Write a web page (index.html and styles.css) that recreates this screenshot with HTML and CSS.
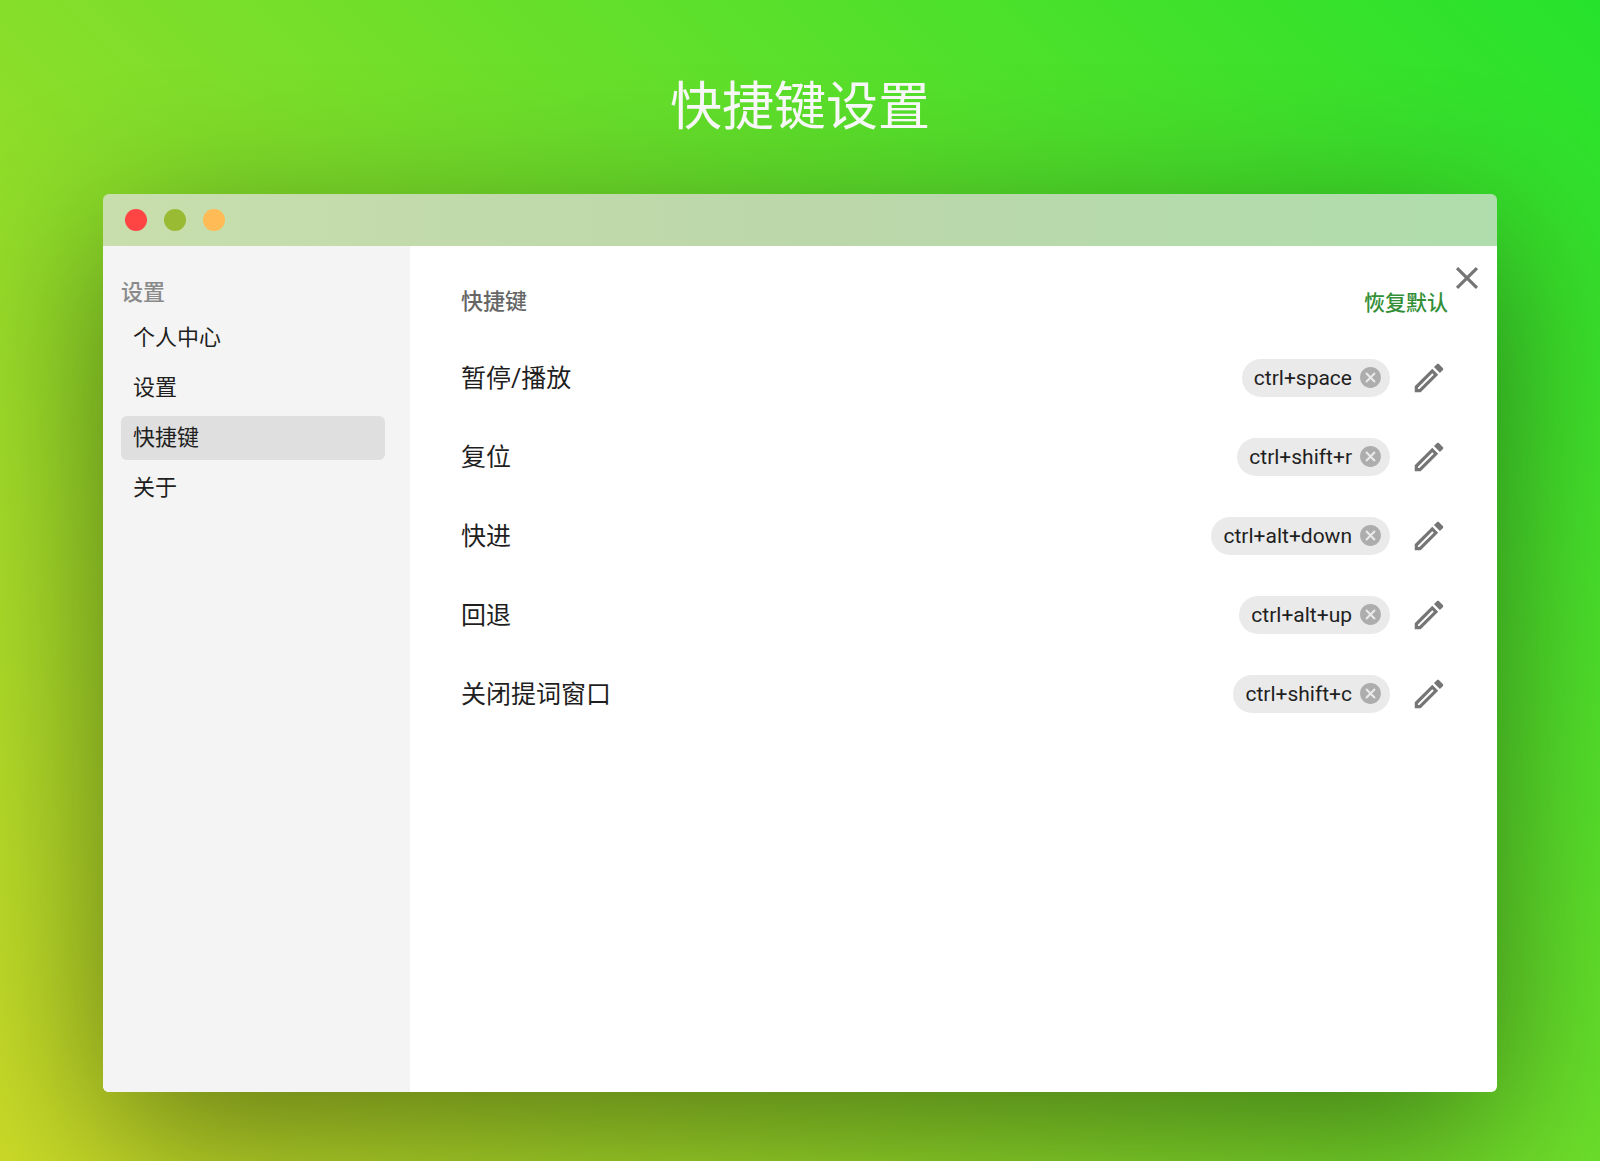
FILE: index.html
```html
<!DOCTYPE html>
<html lang="zh-CN">
<head>
<meta charset="utf-8">
<meta name="viewport" content="width=device-width, initial-scale=1">
<title>快捷键设置</title>
<link rel="stylesheet" href="styles.css">
</head>
<body>
<svg class="sprite" aria-hidden="true">
  <symbol id="icon-edit" viewBox="0 0 24 24"><path d="M14.06 9l.94.94L5.92 19H5v-.92L14.06 9M17.66 3c-.25 0-.51.1-.7.29l-1.83 1.83 3.75 3.75 1.83-1.83c.39-.39.39-1.04 0-1.41l-2.34-2.34c-.2-.2-.45-.29-.71-.29M14.06 6.19L3 17.25V21h3.75L17.81 9.94l-3.75-3.75z"/></symbol>
  <symbol id="icon-cancel" viewBox="0 0 24 24"><path d="M12 2C6.47 2 2 6.47 2 12s4.47 10 10 10 10-4.47 10-10S17.53 2 12 2zm5 13.59L15.59 17 12 13.41 8.41 17 7 15.59 10.59 12 7 8.41 8.41 7 12 10.59 15.59 7 17 8.41 13.41 12 17 15.59z"/></symbol>
  <symbol id="icon-close" viewBox="0 0 24 24"><path d="M19 6.41L17.59 5 12 10.59 6.41 5 5 6.41 10.59 12 5 17.59 6.41 19 12 13.41 17.59 19 19 17.59 13.41 12z"/></symbol>
</svg>
<h1 class="page-title">快捷键设置</h1>
<div class="window">
  <div class="titlebar">
    <span class="dot dot-red"></span>
    <span class="dot dot-green"></span>
    <span class="dot dot-orange"></span>
  </div>
  <div class="window-body">
    <nav class="sidebar">
      <h2 class="sidebar-title">设置</h2>
      <a class="nav-item" href="#account">个人中心</a>
      <a class="nav-item" href="#settings">设置</a>
      <a class="nav-item is-active" href="#shortcuts" aria-current="page">快捷键</a>
      <a class="nav-item" href="#about">关于</a>
    </nav>
    <main class="content">
      <button class="icon-button close" type="button" aria-label="关闭"><svg class="icon"><use href="#icon-close"/></svg></button>
      <div class="content-header">
        <h2 class="content-title">快捷键</h2>
        <button class="reset" type="button">恢复默认</button>
      </div>
      <ul class="shortcuts">
        <li class="row">
          <span class="row-label">暂停/播放</span>
          <span class="chip">ctrl+space<button class="chip-delete" type="button" aria-label="删除"><svg class="chip-icon"><use href="#icon-cancel"/></svg></button></span>
          <button class="icon-button" type="button" aria-label="编辑"><svg class="icon"><use href="#icon-edit"/></svg></button>
        </li>
        <li class="row">
          <span class="row-label">复位</span>
          <span class="chip">ctrl+shift+r<button class="chip-delete" type="button" aria-label="删除"><svg class="chip-icon"><use href="#icon-cancel"/></svg></button></span>
          <button class="icon-button" type="button" aria-label="编辑"><svg class="icon"><use href="#icon-edit"/></svg></button>
        </li>
        <li class="row">
          <span class="row-label">快进</span>
          <span class="chip">ctrl+alt+down<button class="chip-delete" type="button" aria-label="删除"><svg class="chip-icon"><use href="#icon-cancel"/></svg></button></span>
          <button class="icon-button" type="button" aria-label="编辑"><svg class="icon"><use href="#icon-edit"/></svg></button>
        </li>
        <li class="row">
          <span class="row-label">回退</span>
          <span class="chip">ctrl+alt+up<button class="chip-delete" type="button" aria-label="删除"><svg class="chip-icon"><use href="#icon-cancel"/></svg></button></span>
          <button class="icon-button" type="button" aria-label="编辑"><svg class="icon"><use href="#icon-edit"/></svg></button>
        </li>
        <li class="row">
          <span class="row-label">关闭提词窗口</span>
          <span class="chip">ctrl+shift+c<button class="chip-delete" type="button" aria-label="删除"><svg class="chip-icon"><use href="#icon-cancel"/></svg></button></span>
          <button class="icon-button" type="button" aria-label="编辑"><svg class="icon"><use href="#icon-edit"/></svg></button>
        </li>
      </ul>
    </main>
  </div>
</div>
</body>
</html>
```

FILE: styles.css
```css
* {
  box-sizing: border-box;
}

body {
  margin: 0;
  min-height: 100vh;
  padding: 68px 103px 69px;
  display: flex;
  flex-direction: column;
  gap: 46px;
  background: linear-gradient(45deg, rgb(204, 219, 40), rgb(38, 226, 44));
  font-family: Roboto, "Noto Sans CJK SC", sans-serif;
  color: #1f1f1f;
}

h1,
h2,
ul {
  margin: 0;
  padding: 0;
  font-weight: 400;
}

button {
  margin: 0;
  padding: 0;
  border: 0;
  background: none;
  font: inherit;
  cursor: pointer;
}

.sprite {
  display: none;
}

.page-title {
  position: relative;
  z-index: 1;
  font-size: 52px;
  line-height: 80px;
  text-align: center;
  color: #f7f7f7;
}

.window {
  flex: 1;
  display: flex;
  flex-direction: column;
  border-radius: 6px;
  box-shadow: 0 46px 160px rgba(0, 0, 0, 0.46);
}

.titlebar {
  height: 52px;
  padding: 0 22px;
  display: flex;
  align-items: center;
  gap: 17px;
  border-radius: 6px 6px 0 0;
  background: linear-gradient(to right, rgb(200, 222, 173), rgb(188, 215, 170) 50%, rgb(176, 221, 173));
}

.dot {
  width: 22px;
  height: 22px;
  border-radius: 50%;
}

.dot-red {
  background: #ff4444;
}

.dot-green {
  background: #99bb33;
}

.dot-orange {
  background: #ffbb55;
}

.window-body {
  flex: 1;
  display: flex;
  overflow: hidden;
  border-radius: 0 0 6px 6px;
  background: #fff;
}

.sidebar {
  width: 307px;
  padding: 30px 25px 30px 18px;
  display: flex;
  flex-direction: column;
  gap: 6px;
  background: #f4f4f4;
  font-size: 22px;
}

.sidebar-title {
  font-size: 22px;
  font-weight: 500;
  line-height: 34px;
  color: #8a8a8a;
}

.nav-item {
  padding: 0 12px;
  border-radius: 6px;
  line-height: 44px;
  color: inherit;
  text-decoration: none;
}

.is-active {
  background: #dfdfdf;
}

.content {
  position: relative;
  flex: 1;
  padding: 30px 49px 30px 51px;
}

.close {
  position: absolute;
  top: 13px;
  right: 11px;
}

.content-header {
  height: 50px;
  display: flex;
  align-items: center;
  justify-content: space-between;
}

.content-title {
  padding-bottom: 5px;
  font-size: 22px;
  font-weight: 500;
  color: #666;
}

.reset {
  padding-bottom: 1px;
  font-size: 21px;
  font-weight: 500;
  color: #338f37;
}

.shortcuts {
  padding-top: 12px;
  list-style: none;
}

.row {
  height: 79px;
  display: flex;
  align-items: center;
  gap: 20px;
}

.row-label {
  flex: 1;
  padding-bottom: 3px;
  font-size: 25px;
}

.chip {
  height: 38px;
  padding: 0 7px 0 12px;
  display: flex;
  align-items: center;
  gap: 6px;
  border-radius: 19px;
  background: #eaeaea;
  font-size: 21px;
}

.chip-delete {
  display: flex;
  color: #adadad;
}

.chip-icon {
  width: 25px;
  height: 25px;
  fill: currentColor;
}

.icon-button {
  display: flex;
  color: #757575;
}

.icon {
  width: 38px;
  height: 38px;
  fill: currentColor;
}
```
